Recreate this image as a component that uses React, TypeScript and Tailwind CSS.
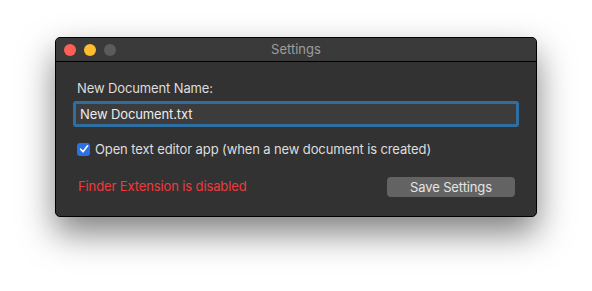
import {useState} from 'react'

const font = {fontFamily: 'Inter, "Noto Sans", sans-serif'}

export default function App() {
  let [name, setName] = useState('New Document.txt')
  let [openEditor, setOpenEditor] = useState(true)

  return (
    <div
      className="w-[592px] h-[291px] bg-white pl-[55px] pt-[37px]"
      style={font}
    >
      <div className="w-[482px] h-[180px] flex flex-col rounded-[5px] border border-black bg-[#323232] overflow-hidden shadow-[0_16px_34px_rgba(0,0,0,0.5)]">
        {/* title bar */}
        <div className="relative flex items-center h-[24px] flex-none bg-[#3a3a3a] border-b border-black pl-2 gap-2">
          <span className="w-3 h-3 rounded-full bg-[#fe5f57]" />
          <span className="w-3 h-3 rounded-full bg-[#febc2e]" />
          <span className="w-3 h-3 rounded-full bg-[#5b5b5b]" />
          <span className="absolute inset-0 flex items-center justify-center text-[13px] text-[#9d9d9d]">
            Settings
          </span>
        </div>

        <div className="flex flex-col px-[17px] pt-[18px] text-[13px] tracking-[-0.12px] text-[#dedede]">
          <label className="pl-1 leading-4">New Document Name:</label>
          <input
            value={name}
            onChange={e => setName(e.target.value)}
            className="mt-[5px] h-[26px] rounded-[3px] border-[3px] border-[#2f6ea1] bg-[#3c3c3c] px-[4px] text-[13px] text-[#ececec] outline-none"
            style={font}
          />

          <label className="mt-[14px] pl-1 flex items-center gap-[5px] leading-4">
            <button
              onClick={() => setOpenEditor(!openEditor)}
              className="w-[13px] h-[13px] rounded-[3px] bg-[#2d6fe4] flex items-center justify-center"
            >
              {openEditor && (
                <svg width="10" height="10" viewBox="0 0 10 10">
                  <path
                    d="M1.6 5.2 L4 7.8 L8.6 1.8"
                    fill="none"
                    stroke="white"
                    strokeWidth="1.6"
                    strokeLinecap="round"
                    strokeLinejoin="round"
                  />
                </svg>
              )}
            </button>
            Open text editor app (when a new document is created)
          </label>

          <div className="mt-[20px] flex items-center justify-between">
            <span className="pl-[5px] text-[#ee3a3d]">
              Finder Extension is disabled
            </span>
            <button className="mr-1 w-[128px] h-[20px] rounded-[4px] bg-[#636363] text-[13px] text-[#e4e4e4] leading-none">
              Save Settings
            </button>
          </div>
        </div>
      </div>
    </div>
  )
}
